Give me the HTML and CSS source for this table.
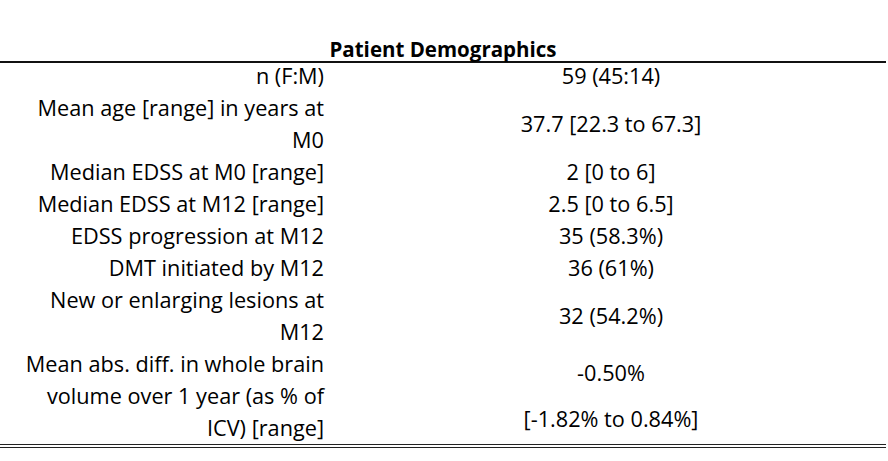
FILE: index.html
```html
<!DOCTYPE html>
<html lang="en">
<head>
<meta charset="utf-8">
<title>Patient Demographics</title>
<link rel="stylesheet" href="styles.css">
</head>
<body>
<div class="sheet">
  <div class="caption">Patient Demographics</div>
  <div class="rows">
    <div class="row">
      <div class="label">n (F:M)</div>
      <div class="value">59 (45:14)</div>
    </div>
    <div class="row">
      <div class="label">Mean age [range] in years at<br>M0</div>
      <div class="value">37.7 [22.3 to 67.3]</div>
    </div>
    <div class="row">
      <div class="label">Median EDSS at M0 [range]</div>
      <div class="value">2 [0 to 6]</div>
    </div>
    <div class="row">
      <div class="label">Median EDSS at M12 [range]</div>
      <div class="value">2.5 [0 to 6.5]</div>
    </div>
    <div class="row">
      <div class="label">EDSS progression at M12</div>
      <div class="value">35 (58.3%)</div>
    </div>
    <div class="row">
      <div class="label">DMT initiated by M12</div>
      <div class="value">36 (61%)</div>
    </div>
    <div class="row">
      <div class="label">New or enlarging lesions at<br>M12</div>
      <div class="value">32 (54.2%)</div>
    </div>
    <div class="row">
      <div class="label">Mean abs. diff. in whole brain<br>volume over 1 year (as % of<br>ICV) [range]</div>
      <div class="value split">
        <span>-0.50%</span>
        <span>[-1.82% to 0.84%]</span>
      </div>
    </div>
  </div>
</div>
</body>
</html>
```
FILE: styles.css
```css
html, body {
  margin: 0;
  padding: 0;
  background: #ffffff;
}

body {
  font-family: "Open Sans", "Lato", sans-serif;
  color: #000000;
}

.sheet {
  width: 886px;
  padding-top: 37px;
}

.caption {
  font-weight: 700;
  font-size: 20.5px;
  line-height: 24px;
  text-align: center;
  border-bottom: 2px solid #111111;
}

.rows {
  margin-top: -3px;
  border-bottom: 4px double #222222;
}

.row {
  display: grid;
  grid-template-columns: 336px 1fr;
  font-size: 21.7px;
  line-height: 32px;
}

.label {
  text-align: right;
  padding-right: 12px;
}

.value {
  text-align: center;
  display: flex;
  flex-direction: column;
  justify-content: center;
}

.value.split {
  gap: 14px;
}
```
